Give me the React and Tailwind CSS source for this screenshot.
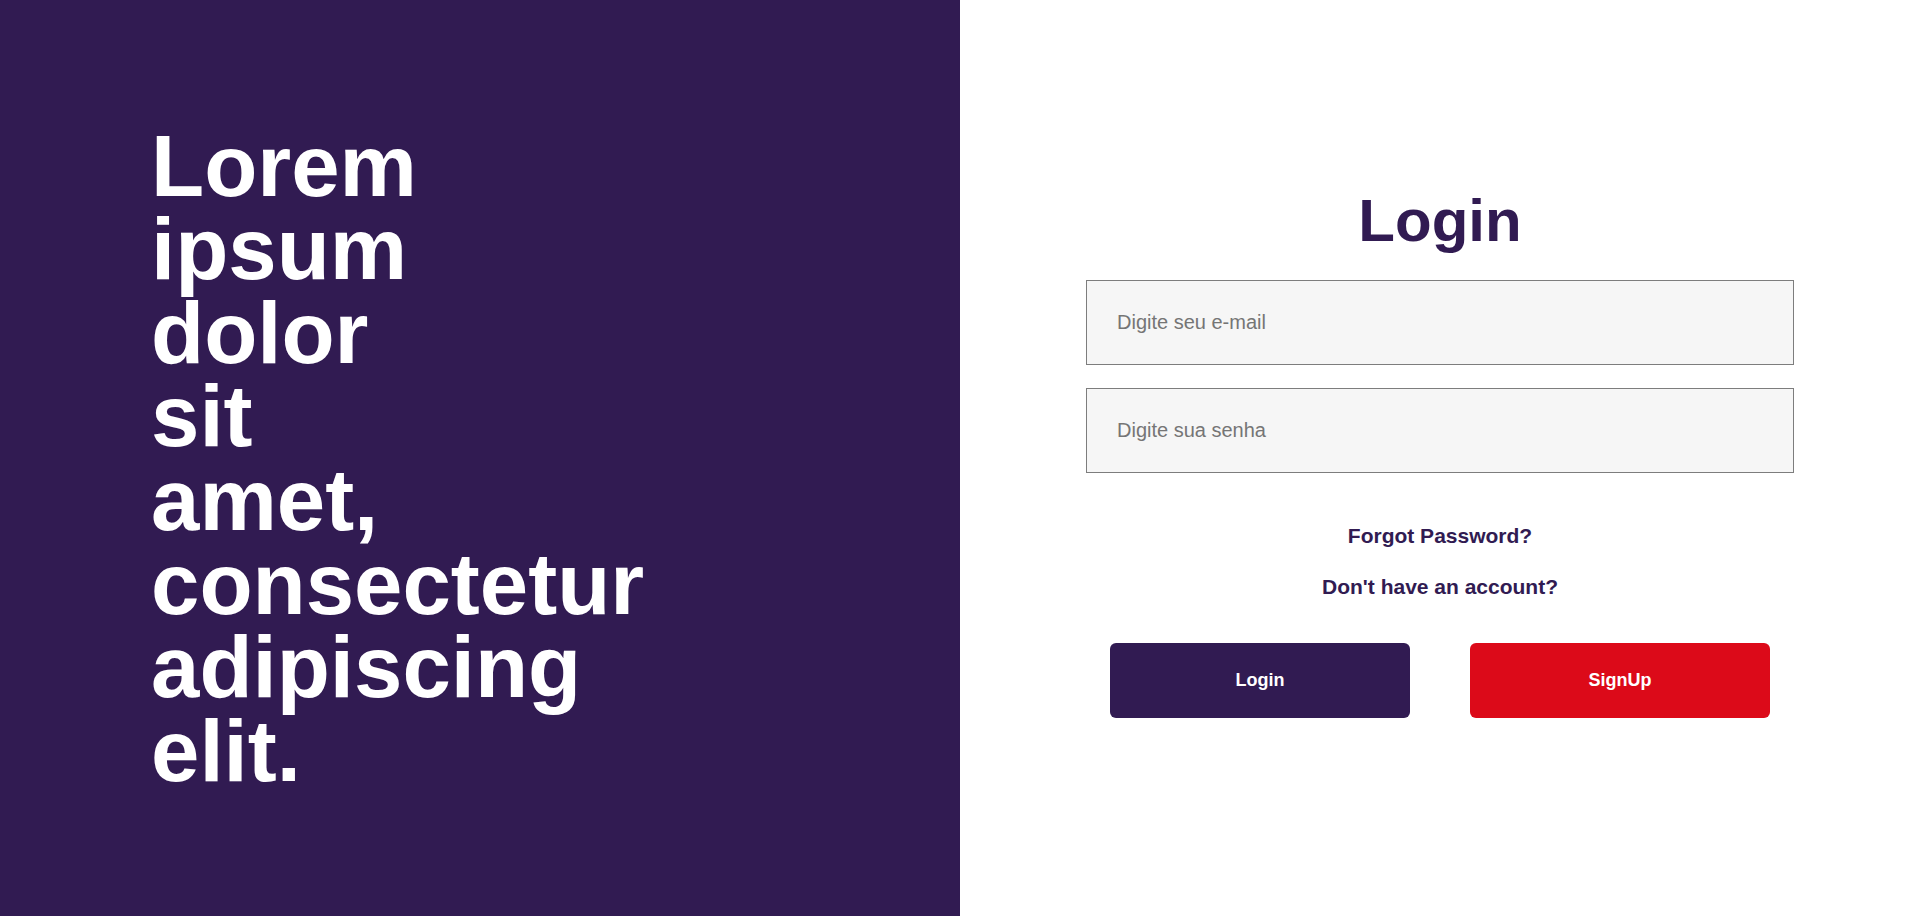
import React from 'react'

export default function App() {
    return (
        <main className="flex w-full h-[916px] font-['Liberation_Sans',Arial,sans-serif]">
            {/* Left side - hero text */}
            <section className="w-1/2 h-full bg-[#311b52] flex items-center pl-[151px]">
                <h2 className="w-[300px] text-white font-bold text-[87px] leading-[0.96]">
                    Lorem ipsum dolor sit amet, consectetur adipiscing elit.
                </h2>
            </section>

            {/* Right side - login form */}
            <section className="w-1/2 h-full bg-white flex flex-col items-center justify-center pb-[8px]">
                <h1 className="text-6xl leading-none font-bold text-[#311b52]">Login</h1>

                <input
                    type="email"
                    placeholder="Digite seu e-mail"
                    className="mt-[29px] w-[708px] h-[85px] bg-[#f6f6f6] border border-[#7d7d7d] pl-[30px] text-[20px] text-[#333] placeholder:text-[#757575] outline-none"
                />
                <input
                    type="password"
                    placeholder="Digite sua senha"
                    className="mt-[23px] w-[708px] h-[85px] bg-[#f6f6f6] border border-[#7d7d7d] pl-[30px] text-[20px] text-[#333] placeholder:text-[#757575] outline-none"
                />

                <a href="#" className="mt-[51px] text-[21px] leading-[24px] font-bold text-[#311b52]">
                    Forgot Password?
                </a>
                <a href="#" className="mt-[27px] text-[21px] leading-[24px] font-bold text-[#311b52]">
                    Don't have an account?
                </a>

                <div className="mt-[44px] flex gap-[60px]">
                    <button className="w-[300px] h-[75px] rounded-md bg-[#311b52] text-white font-bold text-[18px]">
                        Login
                    </button>
                    <button className="w-[300px] h-[75px] rounded-md bg-[#dc0a19] text-white font-bold text-[18px]">
                        SignUp
                    </button>
                </div>
            </section>
        </main>
    )
}
